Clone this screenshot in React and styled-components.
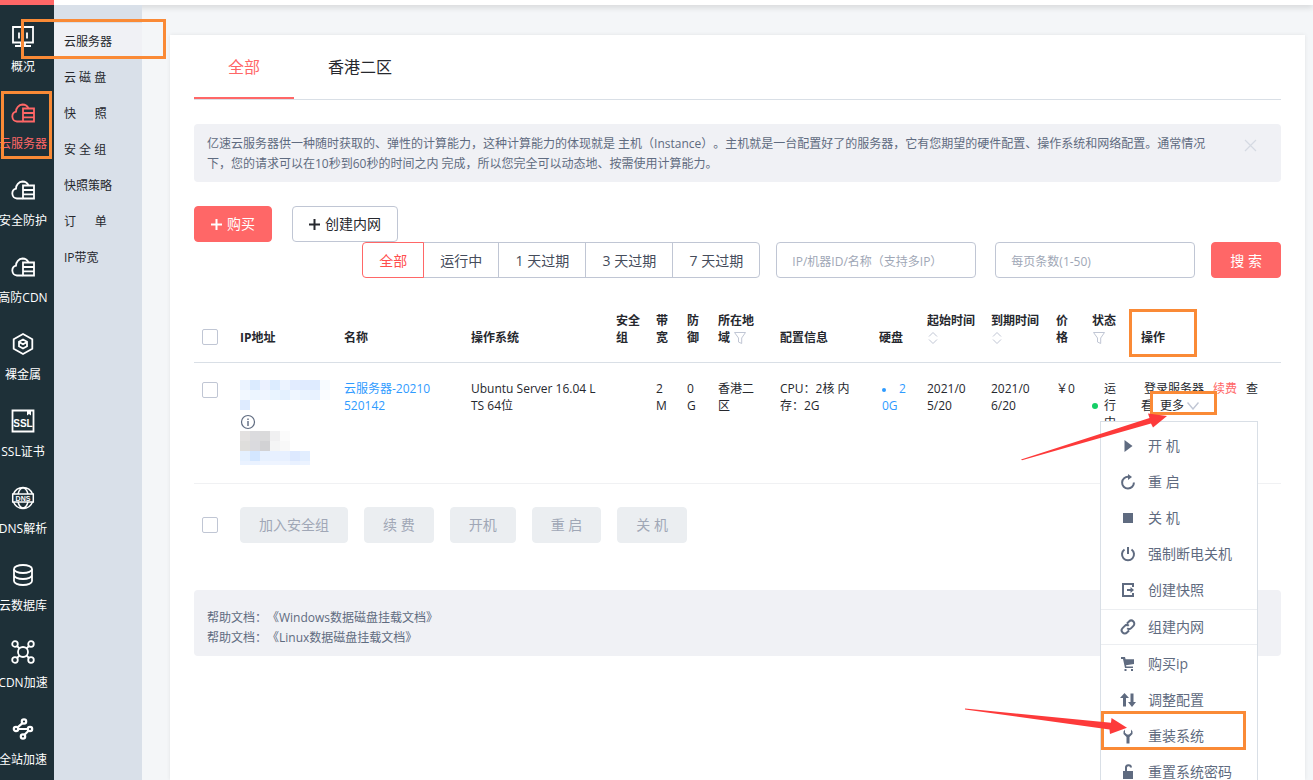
import React from 'react';
import styled, { createGlobalStyle, css } from 'styled-components';

const colors = {
  red: '#ff6767',
  dark: '#1e3038',
  text: '#26282e',
  muted: '#5f6b80',
  hint: '#a0a7b6',
  line: '#d9dfe6',
  border: '#c0c6d4',
  panel: '#f0f1f5',
  blue: '#2f9bff',
  mark: '#fa8a36',
  arrow: '#fd3a3a'
};

const GlobalStyle = createGlobalStyle`
  * {
    box-sizing: border-box;
  }
  body {
    margin: 0;
    color: ${colors.text};
    background: #f4f6f8;
    font: 12px/17px 'Open Sans', 'Noto Sans CJK SC', sans-serif;
    text-spacing-trim: space-all;
  }
  button, input {
    font-family: inherit;
  }
  a {
    color: inherit;
    text-decoration: none;
  }
`;

const Shell = styled.div`
  display: flex;
  flex-direction: column;
  height: 100vh;
  overflow: hidden;
`;

const TopBar = styled.header`
  position: relative;
  z-index: 1;
  flex: none;
  display: flex;
  height: 5px;
  background: #fff;
  box-shadow: 0 2px 6px rgba(0, 0, 0, 0.16);

  &::before {
    content: '';
    width: 54px;
    background: ${colors.red};
  }
`;

const Body = styled.div`
  display: flex;
  flex: 1;
  min-height: 0;
`;

const SideNav = styled.nav`
  position: relative;
  z-index: 2;
  flex: none;
  width: 54px;
  padding: 9px 8px 0 0;
  background: ${colors.dark};
`;

const SideItem = styled.a`
  position: relative;
  display: flex;
  flex-direction: column;
  align-items: center;
  gap: 10px;
  height: 77px;
  padding-top: 10px;
  color: ${(p) => (p.$active ? colors.red : '#fff')};
  white-space: nowrap;

  > svg {
    flex: none;
  }
`;

const SubNav = styled.nav`
  position: relative;
  z-index: 3;
  flex: none;
  width: 88px;
  padding-top: 18px;
  background: #d9e0e9;
`;

const SubItem = styled.a`
  position: relative;
  display: block;
  height: 36px;
  padding-left: 10px;
  line-height: 38px;
  white-space: pre;
  background: ${(p) => (p.$active ? colors.panel : 'transparent')};
`;

const Main = styled.main`
  flex: 1;
  min-width: 0;
  padding: 30px 8px 0 28px;
`;

const Card = styled.section`
  height: 100%;
  padding: 0 24px;
  background: #fff;
  box-shadow: 0 0 4px rgba(0, 0, 0, 0.08);
`;

const Tabs = styled.div`
  display: flex;
  margin-bottom: 24px;
  border-bottom: 1px solid ${colors.line};
`;

const Tab = styled.button`
  height: 64px;
  padding: 0 34px;
  border: 0;
  border-bottom: 2px solid ${(p) => (p.$active ? colors.red : 'transparent')};
  background: none;
  color: ${(p) => (p.$active ? colors.red : colors.text)};
  font-size: 16px;
`;

const Notice = styled.div`
  display: flex;
  align-items: flex-start;
  justify-content: space-between;
  margin-bottom: 24px;
  padding: 10px 24px 8px 13px;
  border-radius: 4px;
  background: ${colors.panel};
  color: ${colors.muted};
  line-height: 20px;

  p {
    margin: 0;
  }
`;

const CloseButton = styled.button`
  flex: none;
  display: flex;
  margin: 5px 0 0 32px;
  padding: 0;
  border: 0;
  background: none;
  color: #d5dae2;
`;

const ActionRow = styled.div`
  display: flex;
  gap: 20px;
`;

const Button = styled.button`
  display: inline-flex;
  align-items: center;
  justify-content: center;
  gap: 5px;
  height: 36px;
  padding: 0 ${(p) => (p.$wide ? 18 : 16)}px;
  border: 1px solid ${colors.border};
  border-radius: 4px;
  background: #fff;
  color: ${colors.text};
  font-size: 14px;
  white-space: nowrap;

  span {
    padding-bottom: 2px;
  }

  ${(p) =>
    p.$primary &&
    css`
      border-color: ${colors.red};
      background: ${colors.red};
      color: #fff;
    `}

  &:disabled {
    flex: none;
    border-color: #ebeef1;
    background: #ebeef1;
    color: ${colors.hint};
  }
`;

const FilterRow = styled.form`
  display: flex;
  justify-content: flex-end;
  gap: 16px;
  margin-bottom: 16px;
`;

const RadioGroup = styled.div`
  display: flex;
`;

const RadioItem = styled.label`
  position: relative;
  height: 36px;
  margin-left: -1px;
  padding: 0 16px;
  border: 1px solid ${colors.border};
  color: #454c5b;
  font-size: 14px;
  line-height: 35px;
  text-align: center;
  white-space: nowrap;

  input {
    position: absolute;
    opacity: 0;
  }
  &:nth-child(n + 3) {
    min-width: 88px;
  }
  &:first-child {
    border-radius: 4px 0 0 4px;
  }
  &:last-child {
    border-radius: 0 4px 4px 0;
  }
  &:has(input:checked) {
    z-index: 1;
    border-color: ${colors.red};
    color: #ff4f4f;
  }
`;

const Fields = styled.div`
  display: flex;
  gap: 19px;
`;

const TextInput = styled.input`
  width: 200px;
  height: 36px;
  padding: 2px 15px 0;
  border: 1px solid ${colors.border};
  border-radius: 4px;
  font-size: 12px;

  &::placeholder {
    color: ${colors.hint};
    opacity: 1;
  }
`;

const Checkbox = styled.input.attrs({ type: 'checkbox' })`
  appearance: none;
  display: block;
  flex: none;
  width: 16px;
  height: 16px;
  margin: 0;
  border: 1px solid ${colors.border};
  border-radius: 2px;
  background: #fff;

  td & {
    margin-top: 2px;
  }
  th & {
    margin-bottom: 1px;
  }
`;

const Table = styled.table`
  width: 100%;
  table-layout: fixed;
  border-collapse: separate;
  border-spacing: 0;
  word-break: break-all;

  th {
    position: relative;
    padding: 18px 8px 16px;
    border-bottom: 1px solid ${colors.line};
    font-weight: 700;
    text-align: left;
    vertical-align: bottom;
  }
  td {
    position: relative;
    padding: 17px 8px 18px;
    border-bottom: 1px solid #f0f1f3;
    vertical-align: top;
  }
  th > svg {
    vertical-align: -3px;
  }
`;

const BlueLink = styled.a`
  color: ${colors.blue};
`;

const IpCell = styled.div`
  display: flex;
  flex-direction: column;

  svg {
    display: block;
  }
`;

const DiskLink = styled(BlueLink)`
  display: block;
  padding-left: 3px;

  &::before {
    content: '';
    display: inline-block;
    width: 4px;
    height: 4px;
    margin-right: 13px;
    border-radius: 50%;
    background: currentColor;
    vertical-align: middle;
  }
`;

const Price = styled.span`
  white-space: nowrap;
`;

const Status = styled.div`
  display: flex;
  align-items: center;
  gap: 6px;

  &::before {
    content: '';
    flex: none;
    width: 6px;
    height: 6px;
    border-radius: 50%;
    background: #14ce66;
  }
  span {
    width: 12px;
  }
`;

const Operations = styled.div`
  padding-right: 12px;

  a + a {
    margin-left: 9px;
  }
  a:first-child {
    margin-left: 3px;
  }
`;

const RenewLink = styled.a`
  color: ${colors.red};
`;

const MoreButton = styled.button`
  display: inline-flex;
  align-items: center;
  gap: 3px;
  height: 17px;
  margin-left: 7px;
  padding: 0;
  border: 0;
  background: none;
  color: ${colors.text};
  font-size: 12px;
  line-height: 17px;
  vertical-align: top;
`;

const Menu = styled.ul`
  position: absolute;
  z-index: 4;
  top: 58px;
  left: -33px;
  width: 158px;
  margin: 0;
  padding: 6px 0;
  border: 1px solid ${colors.line};
  background: #fff;
  list-style: none;
`;

const MenuItem = styled.li`
  position: relative;

  button {
    display: flex;
    align-items: center;
    gap: 12px;
    width: 100%;
    height: ${(p) => (p.$divided ? 34 : 36)}px;
    padding: 0 0 0 19px;
    border: 0;
    background: none;
    color: ${colors.muted};
    font-size: 14px;
    white-space: nowrap;
  }
  button span {
    padding-bottom: 2px;
  }
  ${(p) =>
    p.$divided &&
    css`
      margin: 1px 0;
      border: solid #eceef1;
      border-width: 1px 0;
    `}
`;

const BatchRow = styled.div`
  display: flex;
  align-items: center;
  gap: 16px;
  margin: 23px 0 47px;
  padding-left: 8px;

  input {
    margin-right: 6px;
  }
`;

const HelpBox = styled.div`
  padding: 18px 13px 8px;
  border-radius: 4px;
  background: ${colors.panel};
  color: ${colors.muted};
  line-height: 20px;

  a {
    display: block;
  }
`;

const Mark = styled.i`
  position: absolute;
  z-index: 5;
  top: ${(p) => p.$top}px;
  left: ${(p) => p.$left}px;
  width: ${(p) => p.$width}px;
  height: ${(p) => p.$height}px;
  border: 3px solid ${colors.mark};
  pointer-events: none;
`;

const Arrow = styled.svg`
  position: absolute;
  z-index: 6;
  top: ${(p) => p.$top}px;
  left: ${(p) => p.$left}px;
  fill: ${colors.arrow};
  pointer-events: none;
`;

const NavIcon = ({ children }) => (
  <svg width="24" height="24" viewBox="0 0 24 24" fill="none" stroke="currentColor" strokeWidth="1.8" aria-hidden="true">
    {children}
  </svg>
);

const CloudIcon = () => (
  <NavIcon>
    <path d="M11.5 20.500H6a5 5 0 0 1-1-9.800 7 7 0 0 1 6.500-7.200c3 0 5 1.600 6 4" />
    <path d="M12 7.500h11v13H12zM12 12h11M12 16.300h11" />
  </NavIcon>
);

const navIcons = {
  overview: (
    <NavIcon>
      <path d="M2 3h20v15.500H2zM10 18v4M14 18v4M4 22h16" />
      <path d="M8 8.500v6M12 6v8M16 8.500v6" />
    </NavIcon>
  ),
  cloud: <CloudIcon />,
  metal: (
    <NavIcon>
      <path d="M12 2l9.300 5.200v9.600L12 22l-9.300-5.200V7.200z" />
      <path d="M12 7.500l4 2.300v4.400l-4 2.300-4-2.300V9.800zM8 10l4 2.300 4-2.300" />
    </NavIcon>
  ),
  ssl: (
    <NavIcon>
      <path d="M1.500 1.500h21v21h-21z" />
      <path d="M16 2h4v4.500l-2-1.500-2 1.500z" fill="currentColor" stroke="none" />
      <text x="12" y="17.500" fill="currentColor" stroke="none" fontSize="10" fontWeight="700" textAnchor="middle" fontFamily="Liberation Sans, sans-serif">SSL</text>
    </NavIcon>
  ),
  dns: (
    <NavIcon>
      <path d="M2.500 8A10.200 10.200 0 0 1 21.500 8M2.500 16a10.200 10.200 0 0 0 19 0M7 8c1-3.500 2.700-6 5-6s4 2.500 5 6M7 16c1 3.500 2.700 6 5 6s4-2.500 5-6" strokeWidth="1.500" />
      <path d="M1.700 8h20.600v8H1.700z" strokeWidth="1.500" />
      <text x="12" y="14.500" fill="currentColor" stroke="none" fontSize="7" fontWeight="700" textAnchor="middle" fontFamily="Liberation Sans, sans-serif">DNS</text>
    </NavIcon>
  ),
  database: (
    <NavIcon>
      <ellipse cx="12" cy="6" rx="9" ry="4" />
      <path d="M3 6v12c0 2.200 4 4 9 4s9-1.800 9-4V6M3 12c0 2.200 4 4 9 4s9-1.800 9-4" />
    </NavIcon>
  ),
  cdn: (
    <NavIcon>
      <circle cx="12" cy="12" r="5" />
      <circle cx="4" cy="4" r="2.800" />
      <circle cx="20" cy="4" r="2.800" />
      <circle cx="4" cy="20" r="2.800" />
      <circle cx="20" cy="20" r="2.800" />
      <path d="M6 6l2.500 2.500M18 6l-2.500 2.500M6 18l2.500-2.500M18 18l-2.500-2.500" />
    </NavIcon>
  ),
  site: (
    <NavIcon>
      <g strokeWidth="2.200">
        <circle cx="13" cy="4.500" r="2.200" />
        <circle cx="5" cy="12" r="2.200" />
        <circle cx="19" cy="12" r="2.200" />
        <circle cx="12" cy="19.500" r="2.200" />
        <path d="M11.500 6.200L6.600 10.300M7.300 12h9.400M17.500 13.700l-4 4" />
      </g>
    </NavIcon>
  )
};

const MenuIcon = ({ children }) => (
  <svg width="16" height="16" viewBox="0 0 16 16" fill="none" stroke="currentColor" strokeWidth="2" aria-hidden="true">
    {children}
  </svg>
);

const solid = { fill: 'currentColor', stroke: 'none' };

const menuIcons = {
  play: <path d="M4.500 2l8 6-8 6z" {...solid} />,
  restart: (
    <>
      <path d="M8.500 2.800A5.900 5.900 0 1 0 13.900 8.500" />
      <path d="M8 0l4 3-4 3z" {...solid} />
    </>
  ),
  stop: <path d="M3 3h10v10H3z" {...solid} />,
  power: <path d="M4.500 3.500a6 6 0 1 0 7 0M8 1v7" />,
  snapshot: (
    <>
      <path d="M13 5V2H3v12h10v-3" />
      <path d="M7 8h5" />
      <path d="M10.500 5l3.500 3-3.500 3z" {...solid} />
    </>
  ),
  link: (
    <path d="M7 4.500l2-2a3 3 0 0 1 4.400 4.400l-2.200 2.200a3 3 0 0 1-4 .2M9 11.500l-2 2a3 3 0 0 1-4.400-4.400l2.200-2.200a3 3 0 0 1 4-.2" />
  ),
  cart: (
    <path d="M1 1h4l.6 2.200H14V8l-8 1.200.3 1.300H13V12H5L3 3H1zM4.500 13h2v2h-2zM11 13h2v2h-2z" {...solid} />
  ),
  adjust: (
    <path d="M4.500 1L9 6H6v8.500H3V6H0zM12 15l4-5h-2.500V1.500h-3V10H8z" {...solid} />
  ),
  wrench: (
    <path d="M5 1.500v3.300L7 6.500h2l2-1.700V1.500l1.500 2V6L9.500 9v6.500h-3V9l-3-3V3.500z" {...solid} />
  ),
  unlock: (
    <>
      <path d="M6 7V4a2.500 2.500 0 0 1 5-.5" />
      <path d="M3 7h10v8H3z" {...solid} />
    </>
  )
};

const PlusIcon = () => (
  <svg width="11" height="11" viewBox="0 0 11 11" stroke="currentColor" strokeWidth="2" aria-hidden="true">
    <path d="M5.500 0v11M0 5.500h11" />
  </svg>
);

const FunnelIcon = () => (
  <svg width="14" height="14" viewBox="0 0 14 14" fill="none" stroke={colors.border} aria-hidden="true">
    <path d="M1.500 1.500h11L8.700 7v5.500L5.500 11V7z" />
  </svg>
);

const SortIcon = () => (
  <svg width="12" height="14" viewBox="0 0 12 14" fill="none" stroke={colors.border} aria-hidden="true">
    <path d="M2 5.500l4-4 4 4M2 8.500l4 4 4-4" />
  </svg>
);

const InfoIcon = () => (
  <svg width="17" height="17" viewBox="0 0 17 17" fill="none" stroke={colors.muted} aria-hidden="true">
    <circle cx="8" cy="8" r="6.500" strokeWidth="1.200" />
    <path d="M8 4.500v1.500M8 7v5" strokeWidth="1.400" />
  </svg>
);

const Mosaic = ({ rows }) => (
  <svg width="90" height="34" viewBox="0 0 90 34" shapeRendering="crispEdges" aria-hidden="true">
    {rows.map((row, y) =>
      row.map((fill, x) => (
        <rect key={`${x}-${y}`} x={x * 10} y={y * 10} width="10" height={y === 3 ? 4 : 10} fill={fill} />
      ))
    )}
  </svg>
);

const ipRows = [
  ['#ebf3ff', '#dbebff', '#ebf1ff', '#dcecff', '#ecf3ff', '#e2ecff', '#e0ebff', '#deebff', '#f7fbff'],
  ['#f2f8ff', '#ecf5ff', '#eff5ff', '#e9f4ff', '#e4f1ff', '#eff6ff', '#eaf3ff', '#e8f2ff', '#fafcff'],
  ['#deebff']
];

const innerIpRows = [
  ['#e3e1e0', '#dbdbde', '#dadadb', '#f0f0f1', '#fbfbfb'],
  ['#dfdedc', '#dadade', '#d2d2d4', '#f4f5f5', '#f8f8f8'],
  ['#e4f0ff', '#d3e6ff', '#e7f1ff', '#e7f0ff', '#e7f0ff', '#dde9ff', '#e2eeff'],
  ['#eaf2ff', '#eaf2ff', '#eef4ff', '#eef4ff', '#eef4ff', '#e9f1ff', '#ecf3ff']
];

const sideItems = [
  { label: '概况', icon: 'overview' },
  { label: '云服务器', icon: 'cloud', active: true },
  { label: '安全防护', icon: 'cloud' },
  { label: '高防CDN', icon: 'cloud' },
  { label: '裸金属', icon: 'metal' },
  { label: 'SSL证书', icon: 'ssl' },
  { label: 'DNS解析', icon: 'dns' },
  { label: '云数据库', icon: 'database' },
  { label: 'CDN加速', icon: 'cdn' },
  { label: '全站加速', icon: 'site' }
];

const subItems = ['云服务器', '云 磁 盘', '快      照', '安 全 组', '快照策略', '订      单', 'IP带宽'];

const filters = ['全部', '运行中', '1 天过期', '3 天过期', '7 天过期'];

const columnWidths = [38, 104, 127, 145, 40, 31, 31, 62, 99, 48, 64, 65, 36, 49];

const menuItems = [
  { label: '开 机', icon: 'play' },
  { label: '重 启', icon: 'restart' },
  { label: '关 机', icon: 'stop' },
  { label: '强制断电关机', icon: 'power' },
  { label: '创建快照', icon: 'snapshot' },
  { label: '组建内网', icon: 'link', divided: true },
  { label: '购买ip', icon: 'cart' },
  { label: '调整配置', icon: 'adjust' },
  { label: '重装系统', icon: 'wrench', marked: true },
  { label: '重置系统密码', icon: 'unlock' }
];

const batchActions = ['加入安全组', '续 费', '开机', '重 启', '关 机'];

const ServerMenu = () => (
  <Menu>
    {menuItems.map((item) => (
      <MenuItem key={item.label} $divided={item.divided}>
        <button type="button">
          <MenuIcon>{menuIcons[item.icon]}</MenuIcon>
          <span>{item.label}</span>
        </button>
        {item.marked && (
          <>
            <Mark $top={-7} $left={0} $width={145} $height={39} />
            <Arrow $top={-11} $left={-136} width="163" height="28">
              <path d="M0 1.500L146 15.700L146.500 11L162 20.700L145 27L144.500 22.500L0 2.500z" />
            </Arrow>
          </>
        )}
      </MenuItem>
    ))}
  </Menu>
);

const ServerTable = () => (
  <Table>
    <colgroup>
      {columnWidths.map((width, i) => (
        <col key={i} width={width} />
      ))}
      <col />
    </colgroup>
    <thead>
      <tr>
        <th><Checkbox aria-label="全选" /></th>
        <th>IP地址</th>
        <th>名称</th>
        <th>操作系统</th>
        <th>安全组</th>
        <th>带宽</th>
        <th>防御</th>
        <th>所在地域 <FunnelIcon /></th>
        <th>配置信息</th>
        <th>硬盘</th>
        <th>起始时间<SortIcon /></th>
        <th>到期时间<SortIcon /></th>
        <th>价格</th>
        <th>状态<br /><FunnelIcon /></th>
        <th>
          操作
          <Mark $top={15} $left={-4} $width={68} $height={48} />
        </th>
      </tr>
    </thead>
    <tbody>
      <tr>
        <td><Checkbox aria-label="云服务器-20210520142" /></td>
        <td>
          <IpCell>
            <Mosaic rows={ipRows} />
            <InfoIcon />
            <Mosaic rows={innerIpRows} />
          </IpCell>
        </td>
        <td><BlueLink href="#server">云服务器-20210<br />520142</BlueLink></td>
        <td>Ubuntu Server 16.04 L<br />TS 64位</td>
        <td />
        <td>2<br />M</td>
        <td>0<br />G</td>
        <td>香港二区</td>
        <td>CPU：2核 内<br />存：2G</td>
        <td><DiskLink href="#disk">2<br />0G</DiskLink></td>
        <td>2021/0<br />5/20</td>
        <td>2021/0<br />6/20</td>
        <td><Price>￥0</Price></td>
        <td><Status><span>运行中</span></Status></td>
        <td>
          <Operations>
            <a href="#login">登录服务器</a>
            <RenewLink href="#renew">续费</RenewLink>
            <a href="#view">查看</a>
            <MoreButton type="button">
              更多
              <svg width="12" height="8" viewBox="0 0 12 8" fill="none" stroke={colors.border} strokeWidth="1.400" aria-hidden="true">
                <path d="M0.500 0.500L6 7l5.500-6.500" />
              </svg>
            </MoreButton>
          </Operations>
          <Mark $top={28} $left={17} $width={67} $height={24} />
          <ServerMenu />
          <Arrow $top={49} $left={-112} width="147" height="50">
            <path d="M0 47.500L128.500 6L127 1.500L146 4L132 15.500L130 11.500L1 48.300z" />
          </Arrow>
        </td>
      </tr>
    </tbody>
  </Table>
);

const App = () => (
  <Shell>
    <GlobalStyle />
    <TopBar />
    <Body>
      <SideNav>
        {sideItems.map((item) => (
          <SideItem key={item.label} href="#nav" $active={item.active}>
            {navIcons[item.icon]}
            {item.label}
            {item.active && <Mark $top={0} $left={1} $width={51} $height={68} />}
          </SideItem>
        ))}
      </SideNav>
      <SubNav>
        {subItems.map((label, i) => (
          <SubItem key={label} href="#sub" $active={i === 0}>
            {label}
            {i === 0 && <Mark $top={-4} $left={-33} $width={145} $height={40} />}
          </SubItem>
        ))}
      </SubNav>
      <Main>
        <Card>
          <Tabs>
            <Tab type="button" $active>全部</Tab>
            <Tab type="button">香港二区</Tab>
          </Tabs>
          <Notice>
            <p>
              亿速云服务器供一种随时获取的、弹性的计算能力，这种计算能力的体现就是 主机（Instance）。主机就是一台配置好了的服务器，它有您期望的硬件配置、操作系统和网络配置。通常情况下，您的请求可以在10秒到60秒的时间之内 完成，所以您完全可以动态地、按需使用计算能力。
            </p>
            <CloseButton type="button" aria-label="关闭">
              <svg width="13" height="13" viewBox="0 0 13 13" stroke="currentColor" strokeWidth="1.200" aria-hidden="true">
                <path d="M1 1l11 11M12 1L1 12" />
              </svg>
            </CloseButton>
          </Notice>
          <ActionRow>
            <Button type="button" $primary><PlusIcon /><span>购买</span></Button>
            <Button type="button"><PlusIcon /><span>创建内网</span></Button>
          </ActionRow>
          <FilterRow>
            <RadioGroup>
              {filters.map((label, i) => (
                <RadioItem key={label}>
                  <input type="radio" name="state" defaultChecked={i === 0} />
                  {label}
                </RadioItem>
              ))}
            </RadioGroup>
            <Fields>
              <TextInput aria-label="IP/机器ID/名称" placeholder="IP/机器ID/名称（支持多IP）" />
              <TextInput aria-label="每页条数" placeholder="每页条数(1-50)" />
            </Fields>
            <Button type="button" $primary $wide>搜 索</Button>
          </FilterRow>
          <ServerTable />
          <BatchRow>
            <Checkbox aria-label="全选" />
            {batchActions.map((label) => (
              <Button key={label} type="button" $wide disabled>
                <span>{label}</span>
              </Button>
            ))}
          </BatchRow>
          <HelpBox>
            <a href="#windows">帮助文档：《Windows数据磁盘挂载文档》</a>
            <a href="#linux">帮助文档：《Linux数据磁盘挂载文档》</a>
          </HelpBox>
        </Card>
      </Main>
    </Body>
  </Shell>
);

export default App;
